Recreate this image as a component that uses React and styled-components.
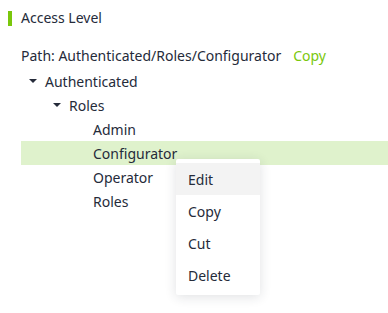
import styled, { createGlobalStyle } from "styled-components";

const GlobalStyle = createGlobalStyle`
  html, body {
    margin: 0;
    padding: 0;
    background: #ffffff;
  }
  body {
    font-family: "Noto Sans", "Open Sans", sans-serif;
    font-size: 14px;
    color: #252b3a;
  }
`;

const Page = styled.div`
  position: relative;
  width: 388px;
  height: 313px;
  padding-top: 8px;
  box-sizing: border-box;
  overflow: hidden;
`;

const Title = styled.h2`
  display: flex;
  align-items: center;
  gap: 9px;
  margin: 0 0 0 8px;
  height: 20px;
  font-size: 14px;
  font-weight: 400;
  line-height: 20px;

  &::before {
    content: "";
    display: block;
    width: 4px;
    height: 15px;
    background: #7ac70c;
  }
`;

const PathRow = styled.div`
  margin: 16px 0 0 21px;
  line-height: 24px;
  display: flex;
  gap: 12px;
`;

const CopyLink = styled.span`
  color: #7ac70c;
  cursor: pointer;
`;

const Tree = styled.ul`
  list-style: none;
  margin: 1px 0 0 21px;
  padding: 0;
`;

const Row = styled.li`
  display: flex;
  align-items: center;
  height: 24px;
  padding-left: ${(p) => p.$level * 24}px;
  background: ${(p) => (p.$active ? "#dff2cc" : "transparent")};
`;

const CaretSlot = styled.span`
  display: flex;
  align-items: center;
  justify-content: center;
  width: 24px;
  height: 24px;

  &::before {
    content: "";
    display: ${(p) => (p.$open ? "block" : "none")};
    width: 0;
    height: 0;
    margin-left: -1px;
    border-left: 4px solid transparent;
    border-right: 4px solid transparent;
    border-top: 4px solid #252b3a;
  }
`;

const Menu = styled.ul`
  position: absolute;
  left: 176px;
  top: 159px;
  width: 84px;
  margin: 0;
  padding: 4px 0;
  list-style: none;
  background: #ffffff;
  border-radius: 2px;
  box-shadow: 0 2px 12px rgba(37, 43, 58, 0.14);
`;

const MenuItem = styled.li`
  height: 32px;
  line-height: 34px;
  padding: 0 12px;
  background: ${(p) => (p.$hover ? "#f3f3f3" : "transparent")};
`;

const nodes = [
  { label: "Authenticated", level: 0, open: true },
  { label: "Roles", level: 1, open: true },
  { label: "Admin", level: 2 },
  { label: "Configurator", level: 2, active: true },
  { label: "Operator", level: 2 },
  { label: "Roles", level: 2 },
];

export default function App() {
  return (
    <Page>
      <GlobalStyle />
      <Title>Access Level</Title>
      <PathRow>
        <span>Path: Authenticated/Roles/Configurator</span>
        <CopyLink>Copy</CopyLink>
      </PathRow>
      <Tree>
        {nodes.map((n, i) => (
          <Row key={i} $level={n.level} $active={n.active}>
            <CaretSlot $open={n.open} />
            <span>{n.label}</span>
          </Row>
        ))}
      </Tree>
      <Menu>
        <MenuItem $hover>Edit</MenuItem>
        <MenuItem>Copy</MenuItem>
        <MenuItem>Cut</MenuItem>
        <MenuItem>Delete</MenuItem>
      </Menu>
    </Page>
  );
}
